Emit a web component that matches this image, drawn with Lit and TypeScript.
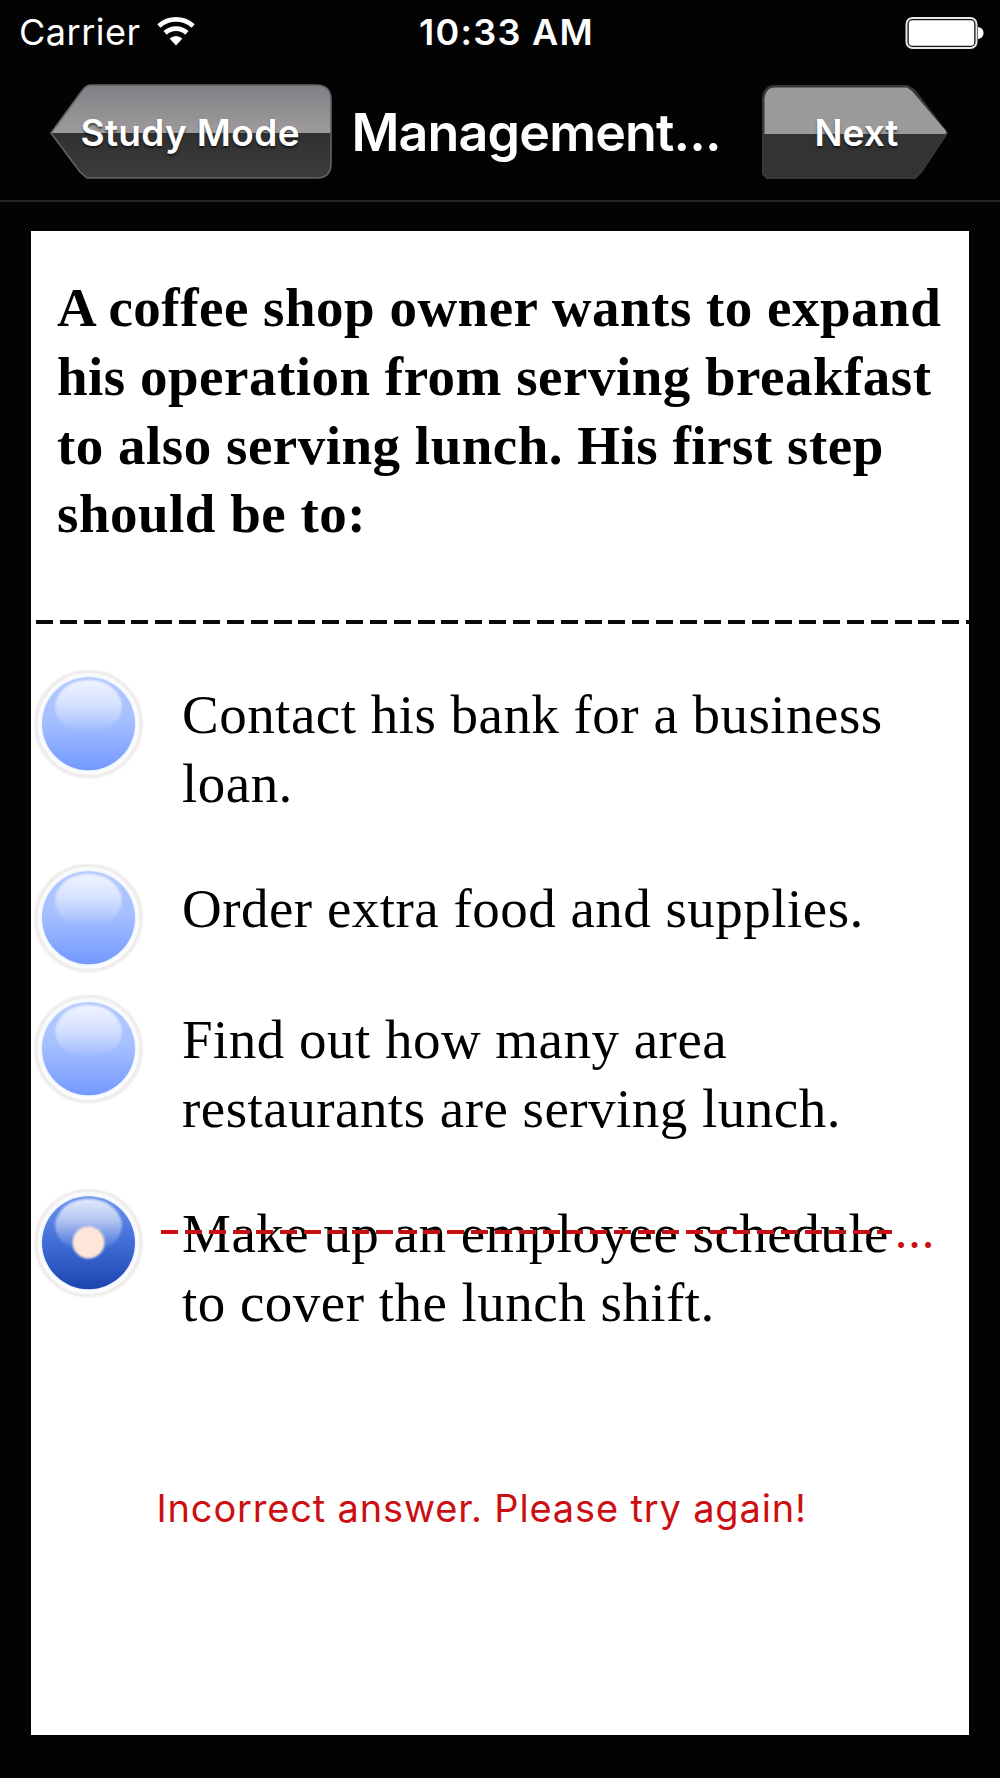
import { LitElement, html, css, svg } from "lit";
import { customElement, property } from "lit/decorators.js";

@customElement("glossy-radio")
class GlossyRadio extends LitElement {
  @property({ type: Boolean }) checked = false;

  static styles = css`
    :host { display: block; width: 110px; height: 110px; flex: none; }
    svg { display: block; }
  `;

  render() {
    const [top, mid, bottom] = this.checked
      ? ["#6f94ea", "#4471da", "#1c44b0"]
      : ["#b3c8ff", "#a6c0ff", "#7399ff"];
    return html`<svg width="110" height="110" viewBox="0 0 110 110">
      <defs>
        <linearGradient id="body" x1="0" y1="0" x2="0" y2="1">
          <stop offset="0" stop-color=${top}></stop>
          <stop offset=".45" stop-color=${mid}></stop>
          <stop offset="1" stop-color=${bottom}></stop>
        </linearGradient>
        <linearGradient id="gloss" x1="0" y1="0" x2="0" y2="1">
          <stop offset="0" stop-color="#fff" stop-opacity=".8"></stop>
          <stop offset=".4" stop-color="#fff" stop-opacity=".55"></stop>
          <stop offset=".75" stop-color="#fff" stop-opacity=".22"></stop>
          <stop offset="1" stop-color="#fff" stop-opacity="0"></stop>
        </linearGradient>
        <filter id="soft" x="-20%" y="-20%" width="140%" height="140%">
          <feGaussianBlur stdDeviation="1"></feGaussianBlur>
        </filter>
      </defs>
      <circle cx="54.5" cy="54" r="52.5" fill="#fff" stroke="#ebe7e9" stroke-width="3.2" filter="url(#soft)"></circle>
      <circle cx="54.5" cy="53.7" r="47.6" fill="#e4edff" filter="url(#soft)"></circle>
      <circle cx="54.5" cy="53.7" r="46.5" fill="url(#body)"></circle>
      <path d="M21.500 32C27 16 40 10 54.500 10S82 16 87.500 32C90 48 78 62 54.500 62S19 48 21.500 32Z" fill="url(#gloss)" filter="url(#soft)"></path>
      ${this.checked ? svg`<circle cx="54.5" cy="53.5" r="16" fill="#ffe6d8" filter="url(#soft)"></circle>` : null}
    </svg>`;
  }
}

interface Answer { text: string; picked?: boolean; }

const ANSWERS: Answer[] = [
  { text: "Contact his bank for a business loan." },
  { text: "Order extra food and supplies." },
  { text: "Find out how many area restaurants are serving lunch." },
  { text: "Make up an employee schedule to cover the lunch shift.", picked: true },
];

@customElement("app-root")
class AppRoot extends LitElement {
  static styles = css`
    :host {
      display: flex; flex-direction: column; box-sizing: border-box;
      width: 1000px; height: 1778px; background: #030303; color: #fff;
      font-family: Inter, "Liberation Sans", sans-serif; overflow: hidden;
    }
    svg { display: block; }
    .status {
      display: grid; grid-template-columns: 1fr auto 1fr; align-items: center;
      height: 65px; padding: 0 16px 0 19px; font-size: 36px; line-height: 65px;
    }
    .carrier { display: flex; align-items: center; gap: 15px; letter-spacing: .5px; }
    .carrier svg { margin-top: -4px; }
    .time { font-weight: 600; letter-spacing: 1.3px; padding-left: 10px; }
    .battery { justify-self: end; }
    .nav {
      display: flex; align-items: flex-start; height: 135px; box-sizing: border-box;
      padding: 18px 51px 0 49px;
    }
    .rule { height: 2px; background: #222224; flex: none; }
    .btn {
      display: grid; border: 0; padding: 0; margin: 0; background: none; color: #fff;
      font: 600 37px/99px Inter, "Liberation Sans", sans-serif;
      text-shadow: 0 2px 2px rgba(0,0,0,.55); text-align: left;
    }
    .btn > * { grid-area: 1 / 1; }
    .back { width: 284px; }
    .back span { padding-left: 31.5px; letter-spacing: .35px; }
    .next { width: 188px; margin-left: auto; }
    .next span { padding-left: 53.5px; }
    .title {
      margin: 0 0 0 18.5px; font-size: 52px; font-weight: 600; line-height: 99px;
      letter-spacing: -.85px; white-space: nowrap;
    }
    .card {
      margin: 29px 31px 0; height: 1503.5px; box-sizing: border-box; padding-top: 43px;
      background: #fff; color: #000; display: flex; flex-direction: column;
      font: 55px/68.8px "Liberation Serif", serif; letter-spacing: .48px;
    }
    .question { margin: 0; padding: 0 5px 0 26px; height: 346px; font-size: 55px; font-weight: 700; letter-spacing: .5px; }
    .dashes {
      height: 4px; margin-left: 4.7px; flex: none;
      background: repeating-linear-gradient(90deg, #0a0a0a 0 17px, transparent 17px 23.85px);
    }
    .answers { list-style: none; margin: 46px 0 0; padding: 0 0 0 3px; height: 713px; display: flex; flex-direction: column; flex: none; }
    .answer { position: relative; display: flex; gap: 38px; min-height: 131px; }
    .answer.tall { min-height: 194px; }
    .label { width: 740px; padding-top: 11.3px; }
    .strike {
      position: absolute; left: 126.7px; top: 41px; width: 731px; height: 4px;
      background: repeating-linear-gradient(90deg, #c81014 0 17px, transparent 17px 23.85px);
    }
    .more {
      position: absolute; left: 861px; top: 22px; color: #c81014;
      font: 600 38px/46px Inter, "Liberation Sans", sans-serif; letter-spacing: 1.4px;
    }
    .message {
      margin: 102px 0 0; padding-left: 125.5px; color: #cb0f12;
      font: 400 38px/46px Inter, "Liberation Sans", sans-serif; letter-spacing: .84px;
    }
  `;

  render() {
    return html`
      <div class="status">
        <div class="carrier">
          <span>Carrier</span>
          <svg width="40" height="30" viewBox="0 0 40 30">
            <g fill="none" stroke="#fff" stroke-width="4.8">
              <path d="M2.9 10A25.6 25.6 0 0 1 37.1 10"></path>
              <path d="M9.1 16.9A16.3 16.3 0 0 1 30.9 16.9"></path>
            </g>
            <path d="M20 29.5L13.6 22.6A9.4 9.4 0 0 1 26.4 22.6Z" fill="#fff"></path>
          </svg>
        </div>
        <div class="time">10:33 AM</div>
        <svg class="battery" width="79" height="32" viewBox="0 0 79 32">
          <rect x="1.5" y="1" width="70" height="30" rx="6" fill="#151515" stroke="#e8e8e8" stroke-width="2"></rect>
          <rect x="3.8" y="3.3" width="65.4" height="25.4" rx="3.5" fill="#fff"></rect>
          <path d="M73 10C76.500 10.500 78.500 13 78.500 16S76.500 21.500 73 22Z" fill="#fff"></path>
        </svg>
      </div>
      <div class="nav">
        <button class="btn back">
          <svg width="284" height="97" viewBox="0 0 284 97">
            <defs>
              <linearGradient id="shine" x1="0" y1="0" x2="0" y2="1">
                <stop offset="0" stop-color="#828085"></stop>
                <stop offset=".515" stop-color="#9d9b9c"></stop>
                <stop offset=".515" stop-color="#303030"></stop>
                <stop offset="1" stop-color="#3c3c3e"></stop>
              </linearGradient>
            </defs>
            <path d="M2 50L32 9Q37 2 41 2H267Q282 2 282 17V80Q282 95 268 95H38L31 89Z"
              fill="url(#shine)" stroke="#626268" stroke-width="1.600"></path>
          </svg>
          <span>Study Mode</span>
        </button>
        <h1 class="title">Management...</h1>
        <button class="btn next">
          <svg width="188" height="97" viewBox="0 0 188 97">
            <path d="M2 91V14Q4 3 14 3H146L153 7L186 50L160 89L154 95H6Z" fill="#333334" stroke="#37373e" stroke-width="2"></path>
            <path d="M3.500 51V16Q4.500 4.500 14 4.500H146L151 8L185 48V51Z" fill="#9b9a9b"></path>
          </svg>
          <span>Next</span>
        </button>
      </div>
      <div class="rule"></div>
      <main class="card">
        <h2 class="question">A coffee shop owner wants to expand his operation from serving breakfast to also serving lunch. His first step should be to:</h2>
        <div class="dashes"></div>
        <ul class="answers">
          ${ANSWERS.map((a) => html`
            <li class="answer ${a.text.length > 32 ? "tall" : ""}">
              <glossy-radio ?checked=${a.picked}></glossy-radio>
              <div class="label">${a.text}</div>
              ${a.picked ? html`<div class="strike"></div><div class="more">...</div>` : null}
            </li>`)}
        </ul>
        <p class="message">Incorrect answer. Please try again!</p>
      </main>`;
  }
}
